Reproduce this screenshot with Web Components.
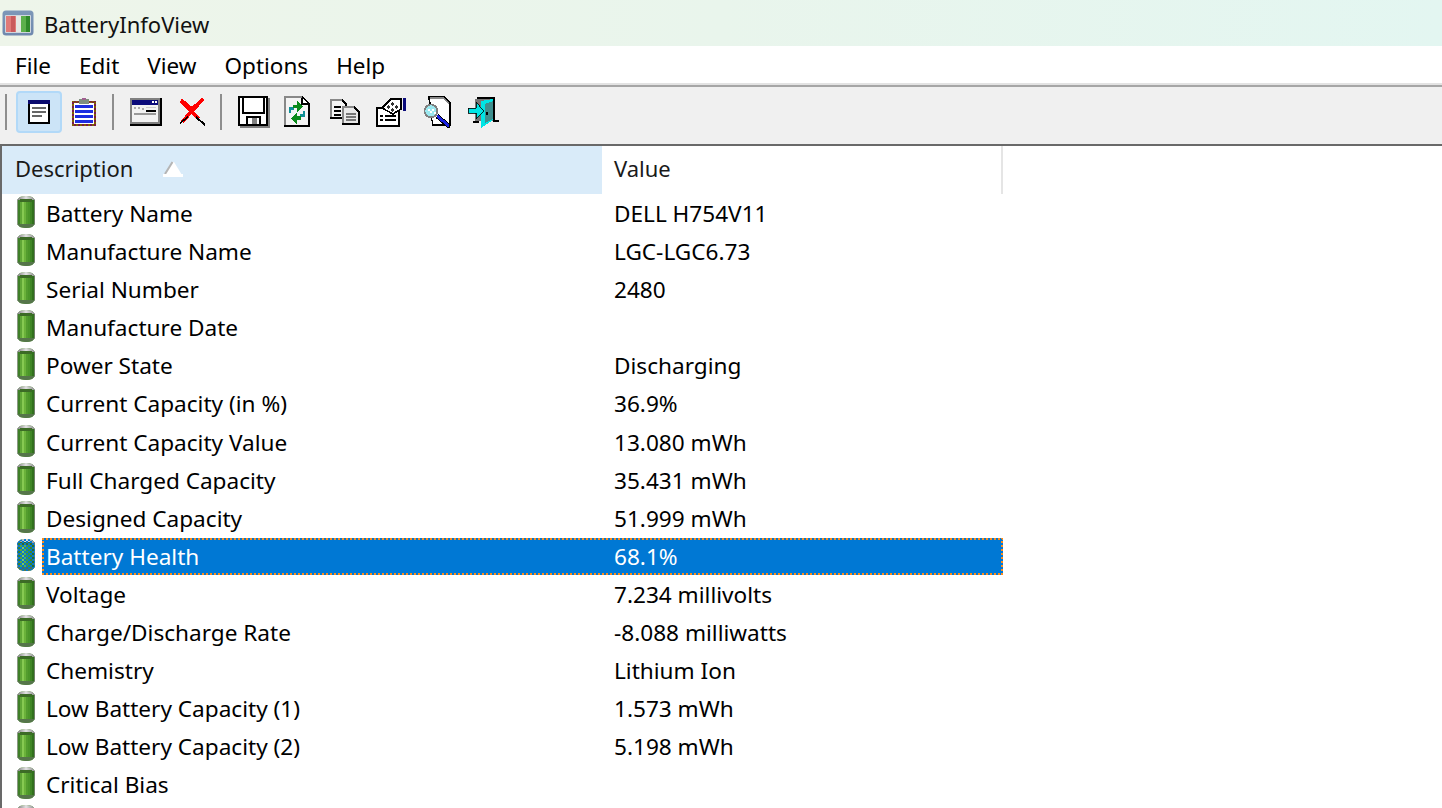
<!DOCTYPE html>
<html>
<head>
<meta charset="utf-8">
<title>BatteryInfoView</title>
<style>
  html, body { margin: 0; height: 100%; overflow: hidden; background: #fff; }
  body { font-family: "Noto Sans", "Open Sans", sans-serif; color: #000; }
</style>
</head>
<body>
<app-window>
  <title-bar>BatteryInfoView</title-bar>
  <menu-bar></menu-bar>
  <tool-bar></tool-bar>
  <info-list></info-list>
</app-window>

<script>
class AppWindow extends HTMLElement {
    constructor() {
        super();
        const shadow = this.attachShadow({ mode: 'open' });
        shadow.innerHTML = `
            <style>
                :host { display: flex; flex-direction: column; width: 1442px; height: 808px; overflow: hidden; }
            </style>
            <slot></slot>
        `;
    }
}

class TitleBar extends HTMLElement {
    constructor() {
        super();
        const shadow = this.attachShadow({ mode: 'open' });
        shadow.innerHTML = `
            <style>
                :host {
                    display: flex; align-items: center; flex: none; height: 46px; gap: 10px; padding-left: 2px;
                    background: linear-gradient(90deg, #eef5ea 0%, #e9f5ec 50%, #e3f6f1 100%);
                    font-size: 22px; color: #111;
                }
                svg { width: 32px; height: 26px; flex: none; margin-top: -1px; filter: blur(0.6px); }
                span { margin-top: 2px; }
            </style>
            <svg viewBox="0 0 32 26">
                <defs>
                    <linearGradient id="frame" x1="0" y1="0" x2="0" y2="1">
                        <stop offset="0" stop-color="#7d97b8"/><stop offset="1" stop-color="#6f88ae"/>
                    </linearGradient>
                </defs>
                <rect x="0.5" y="0.5" width="31" height="25" rx="3.5" fill="url(#frame)"/>
                <rect x="3" y="5" width="26" height="18" rx="1" fill="#cfd6dd"/>
                <rect x="4" y="6" width="10" height="16" fill="#e07a78"/>
                <rect x="9" y="6" width="4" height="16" fill="#c95a5c"/>
                <rect x="14" y="6" width="5" height="16" fill="#e4e8e4"/>
                <rect x="19" y="6" width="9" height="16" fill="#5cb04c"/>
                <rect x="24" y="6" width="4" height="16" fill="#2f8a2a"/>
            </svg>
            <span><slot></slot></span>
        `;
    }
}

class MenuBar extends HTMLElement {
    constructor() {
        super();
        const shadow = this.attachShadow({ mode: 'open' });
        const items = ['File', 'Edit', 'View', 'Options', 'Help'];
        shadow.innerHTML = `
            <style>
                :host {
                    display: flex; align-items: center; flex: none; height: 37px; background: #fff;
                    font-size: 22.500px; padding: 1px 0 0 15px; gap: 28px; box-sizing: border-box;
                }
                span { white-space: nowrap; }
                span:first-child { margin-right: -1px; }
            </style>
            ${items.map(i => `<span>${i}</span>`).join('')}
        `;
    }
}

const TOOL_ICONS = {
    report: `<svg width="22" height="24" viewBox="0 0 22 24">
        <rect x="0" y="0" width="22" height="24" fill="#000"/>
        <rect x="2" y="4" width="18" height="18" fill="#fff"/>
        <rect x="0" y="0" width="22" height="4" fill="#0a0a6e"/>
        <rect x="4" y="7" width="14" height="2" fill="#666"/>
        <rect x="4" y="11" width="14" height="2" fill="#666"/>
        <rect x="4" y="15" width="10" height="2" fill="#666"/>
    </svg>`,
    clipboard: `<svg width="24" height="28" viewBox="0 0 24 28">
        <defs>
            <pattern id="clipedge" width="4" height="4" patternUnits="userSpaceOnUse">
                <rect width="4" height="4" fill="#806000"/>
                <rect width="2" height="2" fill="#7a1a4a"/>
                <rect x="2" y="2" width="2" height="2" fill="#7a1a4a"/>
            </pattern>
        </defs>
        <rect x="0" y="3" width="24" height="25" fill="url(#clipedge)"/>
        <rect x="2" y="5" width="20" height="21" fill="#fff"/>
        <rect x="3" y="7" width="18" height="3" fill="#1c2de0"/>
        <rect x="3" y="12" width="18" height="3" fill="#1c2de0"/>
        <rect x="3" y="17" width="18" height="3" fill="#1c2de0"/>
        <rect x="3" y="22" width="18" height="3" fill="#1c2de0"/>
        <rect x="7" y="1" width="10" height="5" fill="#7f8f7f"/>
        <rect x="10" y="0" width="4" height="2" fill="#a06090"/>
    </svg>`,
    window: `<svg width="32" height="28" viewBox="0 0 32 28">
        <rect x="0" y="0" width="32" height="28" fill="#000"/>
        <rect x="0" y="0" width="30" height="26" fill="#808080"/>
        <rect x="2" y="2" width="26" height="22" fill="#f2f2f2"/>
        <rect x="2" y="2" width="26" height="5" fill="#0a0a7a"/>
        <rect x="22" y="3" width="2" height="2" fill="#fff"/><rect x="25" y="3" width="2" height="2" fill="#fff"/>
        <rect x="4" y="9" width="2" height="2" fill="#aaa"/><rect x="8" y="9" width="2" height="2" fill="#aaa"/>
        <rect x="12" y="10" width="2" height="2" fill="#aaa"/><rect x="16" y="12" width="10" height="2" fill="#000"/>
        <rect x="16" y="9" width="10" height="1" fill="#ccc"/>
        <rect x="4" y="15" width="22" height="2" fill="#999"/>
    </svg>`,
    remove: `<svg width="28" height="28" viewBox="0 0 28 28">
        <path d="M3 2 L14 11 L25 1" stroke="#f00" stroke-width="3.4" fill="none"/>
        <path d="M25 1 L4 24" stroke="#f00" stroke-width="3.6" fill="none"/>
        <path d="M3 3 L21 21" stroke="#f00" stroke-width="3.6" fill="none"/>
        <path d="M18 19 L27 27" stroke="#000" stroke-width="2" fill="none"/>
        <path d="M2 25 L10 19" stroke="#000" stroke-width="1.5" fill="none"/>
    </svg>`,
    save: `<svg width="32" height="32" viewBox="0 0 32 32">
        <rect x="2" y="2" width="30" height="30" fill="#808080"/>
        <path d="M0 0h30v30H0z" fill="#000"/>
        <rect x="2" y="2" width="26" height="26" fill="#fff"/>
        <rect x="4" y="2" width="2" height="14" fill="#000"/>
        <rect x="25" y="2" width="2" height="14" fill="#000"/>
        <rect x="4" y="16" width="23" height="2" fill="#000"/>
        <rect x="8" y="20" width="2" height="8" fill="#000"/>
        <rect x="8" y="20" width="15" height="2" fill="#000"/>
        <rect x="21" y="20" width="2" height="8" fill="#000"/>
        <rect x="14" y="22" width="5" height="6" fill="#808080"/>
    </svg>`,
    refresh: `<svg width="26" height="32" viewBox="0 0 26 32">
        <path d="M0 0h18l8 7v24H0z" fill="#000"/>
        <path d="M0 0h18v2H2v27H0z" fill="#888"/>
        <path d="M2 2h15l7 6v21H2z" fill="#f4f4f4"/>
        <path d="M18 2v6h6" fill="#fff" stroke="#000" stroke-width="2"/>
        <path d="M5 15 V11 H10 V14 H7 V17 H5z" fill="#0f8f96"/>
        <path d="M21 17 V21 H16 V18 H19 V15 H21z" fill="#0f8f96"/>
        <path d="M9 9 H13 V5 L19 10.500 L13 16 V12 H9z" fill="#0a8a1a"/>
        <path d="M17 20 H13 V17 L7 22.500 L13 28 V24 H17z" fill="#0a8a1a"/>
    </svg>`,
    copy: `<svg width="30" height="26" viewBox="0 0 30 26">
        <path d="M0 0h12l5 5v15H0z" fill="#000"/>
        <path d="M0 0h12v2H2v16H0z" fill="#888"/>
        <path d="M2 2h9l4 4v12H2z" fill="#f4f4f4"/>
        <rect x="4" y="7" width="7" height="2" fill="#000"/><rect x="4" y="11" width="7" height="2" fill="#000"/><rect x="4" y="15" width="7" height="2" fill="#000"/>
        <path d="M12 7h12l6 5v14H12z" fill="#000"/>
        <path d="M12 7h12v2H14v15h-2z" fill="#888"/>
        <path d="M14 9h9l5 4v11H14z" fill="#e9e9e9"/>
        <rect x="16" y="14" width="10" height="2" fill="#777"/><rect x="16" y="17" width="10" height="2" fill="#777"/><rect x="16" y="20" width="10" height="2" fill="#777"/>
    </svg>`,
    properties: `<svg width="30" height="29" viewBox="0 0 30 29">
        <rect x="0" y="9" width="24" height="20" fill="#000"/>
        <rect x="2" y="11" width="20" height="16" fill="#fff"/>
        <rect x="4" y="17" width="3" height="2" fill="#000"/><rect x="9" y="17" width="11" height="2" fill="#000"/>
        <rect x="4" y="21" width="3" height="2" fill="#000"/><rect x="9" y="21" width="11" height="2" fill="#000"/>
        <path d="M6 10 L15 1 H25 V11 L17 16 Z" fill="#fff" stroke="#000" stroke-width="1.600"/>
        <path d="M10 9 l2 -2 2 2 -2 2z M14 6 l2 -2 2 2 -2 2z M14 12 l2 -2 2 2 -2 2z M18 9 l2 -2 2 2 -2 2z" fill="#333"/>
        <rect x="27" y="0" width="3" height="13" fill="#0a0a7a"/>
    </svg>`,
    find: `<svg width="28" height="32" viewBox="0 0 28 32">
        <path d="M4 0h16l7 6v24H8V28z" fill="#000"/>
        <path d="M6 2h13l6 5v21H9z" fill="#fff"/>
        <path d="M6 2h13l6 5" fill="none" stroke="#888" stroke-width="1.600"/>
        <circle cx="7" cy="15" r="6.500" fill="#9be8ef" stroke="#808080" stroke-width="1.800"/>
        <path d="M4 13h2v2H4zM8 13h2v2H8zM6 15h2v2H6zM10 16h2v2h-2z" fill="#fff"/>
        <path d="M13 20 L26 31" stroke="#000" stroke-width="4.500"/>
        <path d="M13 20 L25 30" stroke="#1a22e0" stroke-width="2.800"/>
    </svg>`,
    exit: `<svg width="31" height="31" viewBox="0 0 31 31">
        <rect x="9" y="0" width="18" height="2" fill="#000"/>
        <rect x="7" y="2" width="20" height="22" fill="#777"/>
        <path d="M13 4 L25 2 V23 L13 31z" fill="#00e5e5"/>
        <path d="M17 7 L25 4 V22 L17 26z" fill="#3f8f8f"/>
        <rect x="25" y="2" width="2" height="23" fill="#000"/>
        <rect x="18" y="15" width="2" height="3" fill="#000"/>
        <rect x="27" y="23" width="4" height="2" fill="#000"/>
        <rect x="5" y="24" width="6" height="2" fill="#000"/>
        <path d="M0 11h8V5l8 9 -8 8v-6H0z" fill="#00e5e5" stroke="#000" stroke-width="0.800"/>
    </svg>`
};

class ToolButton extends HTMLElement {
    constructor() {
        super();
        this.attachShadow({ mode: 'open' });
    }

    connectedCallback() {
        const icon = TOOL_ICONS[this.getAttribute('icon')];
        this.shadowRoot.innerHTML = `
            <style>
                :host {
                    display: flex; align-items: center; justify-content: center; flex: none;
                    width: 46px; height: 42px; box-sizing: border-box; border-radius: 4px; border: 2px solid transparent;
                }
                :host([pressed]) { background: #cce4f7; border-color: #b2d9f8; }
                svg { display: block; shape-rendering: crispEdges; }
            </style>
            ${icon}
        `;
    }
}

class ToolSeparator extends HTMLElement {
    constructor() {
        super();
        this.attachShadow({ mode: 'open' }).innerHTML = `
            <style>
                :host { display: block; flex: none; width: 2px; height: 36px; background: #8e8e8e; margin: 0 9px 0 5px; }
            </style>
        `;
    }
}

class ToolBar extends HTMLElement {
    constructor() {
        super();
        const shadow = this.attachShadow({ mode: 'open' });
        shadow.innerHTML = `
            <style>
                :host {
                    display: flex; align-items: center; flex: none; height: 63px; box-sizing: border-box;
                    background: #f0f0f0; border-top: 2px solid #e3e3e3; border-bottom: 2px solid #696969;
                    padding: 0 0 5px 0;
                    box-shadow: inset 0 2px 0 #a6a6a6;
                }
                tool-separator:first-child { margin-left: 4px; }
            </style>
            <tool-separator></tool-separator>
            <tool-button icon="report" pressed></tool-button>
            <tool-button icon="clipboard" style="margin-left:-1px"></tool-button>
            <tool-separator></tool-separator>
            <tool-button icon="window"></tool-button>
            <tool-button icon="remove"></tool-button>
            <tool-separator></tool-separator>
            <tool-button icon="save"></tool-button>
            <tool-button icon="refresh" style="margin-left:-3px"></tool-button>
            <tool-button icon="copy" style="margin-left:2px"></tool-button>
            <tool-button icon="properties"></tool-button>
            <tool-button icon="find" style="margin-left:1px"></tool-button>
            <tool-button icon="exit" style="margin-left:-1px"></tool-button>
        `;
    }
}

class BatteryIcon extends HTMLElement {
    constructor() {
        super();
        this.attachShadow({ mode: 'open' });
    }

    connectedCallback() {
        const dither = this.hasAttribute('selected')
            ? `<rect x="0" y="0" width="20" height="32" fill="url(#dither)"/>`
            : '';
        const bands = ['#8b9a84', '#3f7f28', '#5fa636', '#86c952', '#6ab23a', '#539c2e', '#4a9529', '#3f8625', '#31701d', '#6f7f68'];
        this.shadowRoot.innerHTML = `
            <style>
                :host { display: block; flex: none; width: 20px; height: 32px; }
                svg { display: block; }
            </style>
            <svg width="20" height="32" viewBox="0 0 20 32">
                <defs>
                    <linearGradient id="cap" x1="0" y1="0" x2="1" y2="0">
                        <stop offset="0" stop-color="#6f6f6f"/>
                        <stop offset=".5" stop-color="#e2e2e2"/>
                        <stop offset="1" stop-color="#7f7f7f"/>
                    </linearGradient>
                    <pattern id="dither" width="4" height="4" patternUnits="userSpaceOnUse">
                        <rect width="2" height="2" fill="#0078d4"/>
                        <rect x="2" y="2" width="2" height="2" fill="#0078d4"/>
                    </pattern>
                    <clipPath id="shape">
                        <path d="M4 1 Q10 -1 16 1 L19 4 V28 L16 31 Q10 33 4 31 L1 28 V4 Z"/>
                    </clipPath>
                </defs>
                <g clip-path="url(#shape)">
                    ${bands.map((c, i) => `<rect x="${i * 2}" y="0" width="2" height="32" fill="${c}"/>`).join('')}
                    <rect x="0" y="0" width="20" height="4" fill="url(#cap)"/>
                    <rect x="4" y="3" width="12" height="3" fill="#3c6b26"/>
                    <rect x="0" y="28" width="20" height="4" fill="#55754a"/>
                    ${dither}
                </g>
            </svg>
        `;
    }
}

class ListHeader extends HTMLElement {
    constructor() {
        super();
        const shadow = this.attachShadow({ mode: 'open' });
        shadow.innerHTML = `
            <style>
                :host { display: flex; flex: none; height: 48px; font-size: 22px; color: #1a1a1a; }
                div { display: flex; align-items: center; box-sizing: border-box; padding-bottom: 4px; }
                .desc { width: 600px; background: #d9ebf9; padding-left: 13px; gap: 30px; }
                .val { width: 401px; padding-left: 12px; border-right: 2px solid #e5e5e5; }
                svg { display: block; margin-top: 2px; }
            </style>
            <div class="desc">
                <span>Description</span>
                <svg width="20" height="16" viewBox="0 0 20 16">
                    <path d="M9 1h2L19 14H1z" fill="#fff"/>
                    <path d="M9.500 1 L2 13" stroke="#b5b5b5" stroke-width="2" fill="none"/>
                    <rect x="0" y="13" width="20" height="3" fill="#fff"/>
                </svg>
            </div>
            <div class="val">Value</div>
        `;
    }
}

class ListRow extends HTMLElement {
    constructor() {
        super();
        this.attachShadow({ mode: 'open' });
    }

    connectedCallback() {
        const selected = this.hasAttribute('selected');
        this.shadowRoot.innerHTML = `
            <style>
                :host { display: flex; align-items: flex-start; height: 38px; flex: none; font-size: 22.600px; color: #000; }
                :host([tall]) { height: 39px; }
                battery-icon { margin: 1px 6px 0 14px; }
                .cells {
                    display: flex; align-items: center; width: 961px; height: 37px; white-space: nowrap;
                }
                span { margin-bottom: 1px; }
                :host([selected]) .cells {
                    color: #fff;
                    background:
                        repeating-linear-gradient(90deg, #ff8c1a 0 2px, transparent 2px 4px) top / 100% 2px no-repeat,
                        repeating-linear-gradient(90deg, #ff8c1a 0 2px, transparent 2px 4px) bottom / 100% 2px no-repeat,
                        repeating-linear-gradient(0deg, #ff8c1a 0 2px, transparent 2px 4px) left / 2px 100% no-repeat,
                        repeating-linear-gradient(0deg, #ff8c1a 0 2px, transparent 2px 4px) right / 2px 100% no-repeat,
                        #0078d4;
                }
                .d { width: 572px; padding-left: 4px; box-sizing: border-box; flex: none; }
            </style>
            <battery-icon ${selected ? 'selected' : ''}></battery-icon>
            <div class="cells">
                <span class="d">${this.getAttribute('name') || ''}</span>
                <span>${this.getAttribute('value') || ''}</span>
            </div>
        `;
    }
}

class InfoList extends HTMLElement {
    constructor() {
        super();
        const shadow = this.attachShadow({ mode: 'open' });
        shadow.innerHTML = `
            <style>
                :host {
                    display: flex; flex-direction: column; flex: 1; min-height: 0; overflow: hidden;
                    border-left: 2px solid #696969; background: #fff;
                }
                #rows { display: flex; flex-direction: column; padding-top: 1px; }
            </style>
            <list-header></list-header>
            <div id="rows"></div>
        `;
        const rows = [
            ['Battery Name', 'DELL H754V11'],
            ['Manufacture Name', 'LGC-LGC6.73'],
            ['Serial Number', '2480'],
            ['Manufacture Date', ''],
            ['Power State', 'Discharging'],
            ['Current Capacity (in %)', '36.9%'],
            ['Current Capacity Value', '13.080 mWh'],
            ['Full Charged Capacity', '35.431 mWh'],
            ['Designed Capacity', '51.999 mWh'],
            ['Battery Health', '68.1%'],
            ['Voltage', '7.234 millivolts'],
            ['Charge/Discharge Rate', '-8.088 milliwatts'],
            ['Chemistry', 'Lithium Ion'],
            ['Low Battery Capacity (1)', '1.573 mWh'],
            ['Low Battery Capacity (2)', '5.198 mWh'],
            ['Critical Bias', ''],
            ['', '']
        ];
        const list = shadow.getElementById('rows');
        rows.forEach(([name, value], i) => {
            const row = document.createElement('list-row');
            row.setAttribute('name', name);
            row.setAttribute('value', value);
            if (name === 'Battery Health') row.setAttribute('selected', '');
            if (i === 5) row.setAttribute('tall', '');
            list.appendChild(row);
        });
    }
}

customElements.define('battery-icon', BatteryIcon);
customElements.define('list-row', ListRow);
customElements.define('list-header', ListHeader);
customElements.define('info-list', InfoList);
customElements.define('tool-separator', ToolSeparator);
customElements.define('tool-button', ToolButton);
customElements.define('tool-bar', ToolBar);
customElements.define('menu-bar', MenuBar);
customElements.define('title-bar', TitleBar);
customElements.define('app-window', AppWindow);
</script>
</body>
</html>
